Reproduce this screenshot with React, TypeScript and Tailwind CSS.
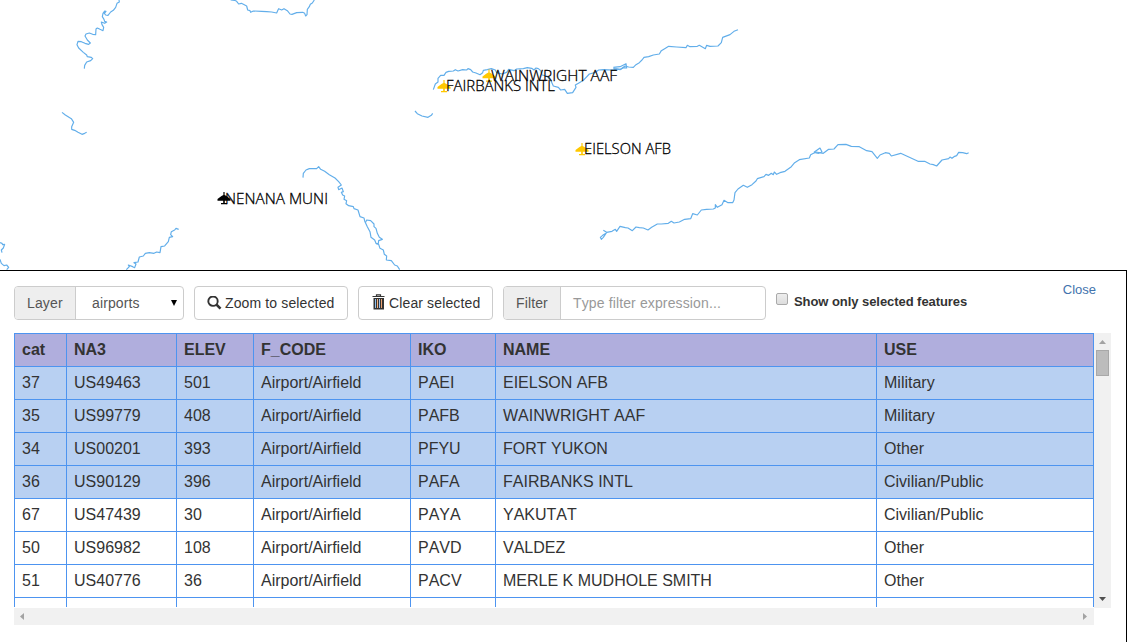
import React from "react";

// River traces, in thirds of a pixel; x is the horizontal offset of each trace.
const rivers = [
  { x: 0, points: "357,0 358,6 351,10 347,22 340,31 332,36 324,46 317,45 313,40 318,34 314,33 309,40 307,50 312,58 314,64 320,66 314,70 304,66 306,74 311,82 309,92 300,88 292,84 288,87 287,104 278,103 268,99 258,102 255,108 262,120 271,129 266,133 255,130 244,125 234,124 231,134 236,144 250,157 260,165 262,170 274,172 278,176 272,182 260,186 254,196 253,206" },
  { x: 0, points: "692,0 704,1 710,4 716,12 724,10 730,13 740,18 743,30 750,32 752,37 760,33 785,34 800,35 815,36 830,39 834,30 836,26 845,30 852,26 862,32 870,42 876,43 890,38 908,37 914,40 917,48 921,44 922,28 928,20 931,13 937,9 943,0" },
  { x: 0, points: "186,337 196,345 214,356 221,367 215,380 215,388 224,391 234,397 246,403 254,400 260,397" },
  { x: 0, points: "0,728 6,730 8,734 14,733 10,744 4,750 6,758" },
  { x: 0, points: "0,778 4,790 12,797 20,795 26,802 20,809" },
  { x: 0, points: "379,809 388,800 385,795 398,800 404,803 408,792 402,788 414,786 418,771 430,768 436,760 448,758 462,760 470,756 480,758 483,740 494,738 505,725 508,712 518,710 512,704 514,695 524,690 528,685 536,688" },
  { x: 870, points: "39,533 40,520 48,510 58,506 80,506 86,500 92,508 104,514 118,524 135,534 146,545 154,555 144,562 146,569 156,564 160,575 154,577 158,585 164,588 162,598 170,602 168,611 176,617 190,620 192,626 204,630 210,650 222,654 224,663 232,680 240,695 243,712 254,720 258,730 266,733 270,745 280,750 283,763 290,768 289,780 304,782 314,795 322,798 329,809" },
  { x: 870, points: "226,668 230,660 242,662 252,672 252,680 258,685 262,700 268,712 277,718 266,722 265,730 258,731" },
  { x: 870, points: "375,333 382,341 396,348 414,352 424,346 428,340" },
  { x: 870, points: "430,269 436,252 444,246 444,235 452,226 462,226 468,217 476,214 490,213 496,209 504,213 518,209 530,210 534,206 542,209 548,216 558,219 570,224 578,218 580,211 592,209 604,206 616,210 620,218 636,222 650,217 656,208 672,212 680,207 700,206 712,203 725,205 732,210 738,204 745,206 752,212 756,225 770,228 782,240 790,258 805,262 812,270 824,268 832,280 848,278 858,262 856,255 868,248 880,241" },
  { x: 1680, points: "70,241 88,222 104,218 116,210 130,209 160,210 170,207 180,209 195,198 206,201 220,202 228,194 238,188 246,180 252,172 266,170 280,165 298,162 304,152 314,146 326,139 350,141 378,143 382,136 390,140 412,139 418,136 436,146 440,136 450,139 474,138 484,128 488,112 510,104 522,94 534,89" },
  { x: 1680, points: "160,202 180,200 198,191 200,204 190,203 182,208 160,206" },
  { x: 1680, points: "130,691 140,697 156,694 166,688 170,694 180,679 196,683 204,684 217,692 228,681 238,683 250,684 264,690 275,682 292,672 304,672 325,670 334,664 342,669 358,666 374,658 392,656 398,641 412,645 424,630 440,628 460,627 466,624 466,614 472,622 486,614 492,601 504,608 518,608 522,600 525,578 534,567 550,556 562,562 576,554 588,543 592,536 612,530 618,523 626,526 634,520 640,524 643,516 650,523 660,518 675,514 694,500 704,488 718,479 748,474 752,464 768,456 790,460 806,448 822,447 834,434 858,433 874,439 898,440 920,452 936,455 952,475 960,465 976,458 988,460 994,468 1022,460 1048,472 1074,484 1094,484 1110,492 1120,494 1130,498 1146,480 1166,476 1170,471 1176,475 1184,469 1190,467 1196,457 1208,458 1220,461 1226,458" },
  { x: 1680, points: "762,457 780,444 786,456 776,460 762,457" },
  { x: 1680, points: "140,697 130,712 124,718 121,712 128,706 138,700" },
];

const airports = [
  { name: "WAINWRIGHT AAF", x: 489, y: 76, len: 126, dx: 2, dy: 5, color: "#ffc800" },
  { name: "FAIRBANKS INTL", x: 444, y: 86.5, len: 109, dx: 2, dy: 4.5, color: "#ffc800" },
  { name: "EIELSON AFB", x: 582, y: 149.5, len: 87, dx: 2, dy: 4.5, color: "#ffc800" },
  { name: "NENANA MUNI", x: 224, y: 198.5, len: 103, dx: 1, dy: 5.5, color: "#000" },
];

const columns = ["cat", "NA3", "ELEV", "F_CODE", "IKO", "NAME", "USE"];
const rows = [
  ["37", "US49463", "501", "Airport/Airfield", "PAEI", "EIELSON AFB", "Military"],
  ["35", "US99779", "408", "Airport/Airfield", "PAFB", "WAINWRIGHT AAF", "Military"],
  ["34", "US00201", "393", "Airport/Airfield", "PFYU", "FORT YUKON", "Other"],
  ["36", "US90129", "396", "Airport/Airfield", "PAFA", "FAIRBANKS INTL", "Civilian/Public"],
  ["67", "US47439", "30", "Airport/Airfield", "PAYA", "YAKUTAT", "Civilian/Public"],
  ["50", "US96982", "108", "Airport/Airfield", "PAVD", "VALDEZ", "Other"],
  ["51", "US40776", "36", "Airport/Airfield", "PACV", "MERLE K MUDHOLE SMITH", "Other"],
  ["", "", "", "", "", "", ""],
];

function MapView() {
  return (
    <svg className="block h-[270px] w-[1127px] shrink-0" viewBox="0 0 1127 270">
      <g transform="scale(0.33333)">
        {rivers.map((r) => (
          <polyline
            key={r.points}
            points={r.points}
            transform={`translate(${r.x} 0)`}
            fill="none"
            stroke="#62aeea"
            strokeWidth="3.5"
            strokeLinejoin="round"
          />
        ))}
      </g>
      {airports.map((a) => (
        <g key={a.name} transform={`translate(${a.x} ${a.y})`}>
          <path
            fill={a.color}
            d="M-.6-6.500h1.200V-3.500L2.500-2.500 6.500.500v1.700H.8V4.500H3V5.700H-3V4.500H-.8V2.200H-6.500V.500l4-3L-.6-3.500z"
          />
          <text
            x={a.dx}
            y={a.dy}
            textLength={a.len}
            lengthAdjust="spacingAndGlyphs"
            stroke="#000"
            strokeWidth="0.3"
            className="fill-black font-['Open_Sans','Noto_Sans',sans-serif] text-[15px] font-light"
          >
            {a.name}
          </text>
        </g>
      ))}
    </svg>
  );
}

function SearchIcon() {
  return (
    <svg className="mr-[3px] size-[15px] shrink-0" viewBox="0 0 15 15" fill="none" stroke="#333">
      <circle cx="6" cy="5.200" r="4.700" strokeWidth="1.900" />
      <path d="M9.500 8.700l4 4" strokeWidth="2.600" />
    </svg>
  );
}

function TrashIcon() {
  return (
    <svg className="mr-1 mb-[2px] h-[16px] w-[13px] shrink-0" viewBox="0 0 13 16">
      <path d="M4.500 2V.8h4V2M.5 2.500h12" fill="none" stroke="#333" strokeWidth="1.200" />
      <path d="M1.500 4h10.500V15.500h-10.500z" fill="#333" />
      <path d="M3.500 5v9" stroke="#8fc0ee" />
      <path d="M5.500 5v9" stroke="#f0b080" />
      <path d="M7.500 5v9" stroke="#9fc4ee" />
      <path d="M9.500 5v9" stroke="#e9a070" />
    </svg>
  );
}

function Toolbar() {
  return (
    <div className="flex h-[34px] text-[14px] leading-5 tracking-[0.13px]">
      <div className="flex w-[170px] overflow-hidden rounded-[4px] border border-[#ccc]">
        <span className="flex w-[61px] items-center border-r border-[#ccc] bg-[#eee] pl-3 text-[#555]">Layer</span>
        <span className="flex flex-1 items-center justify-between pr-[6px] pl-4 text-[#555]">
          airports
          <svg className="h-[6px] w-[6px]" viewBox="0 0 6 6">
            <path d="M0 0h6L3 6z" fill="#000" />
          </svg>
        </span>
      </div>
      <button className="ml-[10px] flex w-[154px] items-center rounded-[4px] border border-[#ccc] pl-3 whitespace-nowrap text-[#333]">
        <SearchIcon />
        Zoom to selected
      </button>
      <button className="ml-[10px] flex w-[135px] items-center rounded-[4px] border border-[#ccc] pl-[13px] whitespace-nowrap text-[#333]">
        <TrashIcon />
        Clear selected
      </button>
      <div className="ml-[10px] flex w-[263px] overflow-hidden rounded-[4px] border border-[#ccc]">
        <span className="flex w-[57px] items-center border-r border-[#ccc] bg-[#eee] pl-3 text-[#555]">Filter</span>
        <span className="flex items-center pl-3 text-[#999]">Type filter expression...</span>
      </div>
      <div className="ml-[10px] flex items-start pt-[7px]">
        <span className="size-[12px] rounded-[2px] border border-[#aaa] bg-linear-to-b from-[#eee] to-[#ddd]" />
        <span className="ml-[6px] text-[13px] leading-[18px] font-bold tracking-[-0.06px] whitespace-nowrap text-[#333]">
          Show only selected features
        </span>
      </div>
      <a className="mt-[-5px] ml-auto pr-[30px] text-[13px] leading-[18px] tracking-normal text-[#4273ad]">Close</a>
    </div>
  );
}

function VerticalScrollbar() {
  return (
    <div className="flex h-[275px] w-[17px] flex-col items-center bg-[#f1f1f1]">
      <svg className="mt-[7px] h-[4px] w-[7px] shrink-0" viewBox="0 0 7 4">
        <path d="M0 4h7L3.500 0z" fill="#a3a3a3" />
      </svg>
      <div className="mt-[6px] h-[26px] w-[13px] border border-[#a8a8a8] bg-[#bcbcbc]" />
      <svg className="mt-auto mb-[7px] h-[4px] w-[7px]" viewBox="0 0 7 4">
        <path d="M0 0h7L3.500 4z" fill="#505050" />
      </svg>
    </div>
  );
}

function HorizontalScrollbar() {
  return (
    <div className="flex h-[17px] w-[1080px] items-center justify-between bg-[#f1f1f1] pr-[7px] pl-[6px]">
      <svg className="h-[7px] w-[4px]" viewBox="0 0 4 7">
        <path d="M4 0v7L0 3.500z" fill="#a3a3a3" />
      </svg>
      <svg className="h-[7px] w-[4px]" viewBox="0 0 4 7">
        <path d="M0 0v7l4-3.500z" fill="#a3a3a3" />
      </svg>
    </div>
  );
}

function AttributeTable() {
  const line = "grid h-[33px] grid-cols-[52px_110px_77px_157px_85px_381px_217px]";
  const cell = "border-t border-r border-[#4d94f0] pl-[7px] leading-8 whitespace-nowrap";
  return (
    <div className="h-[274px] w-[1080px] overflow-hidden border-l border-[#4d94f0] text-[16px] text-[#333]">
      <div className={`${line} bg-[#b0aedd] font-bold`}>
        {columns.map((c) => (
          <div key={c} className={cell}>{c}</div>
        ))}
      </div>
      {rows.map((row, i) => (
        <div key={i} className={`${line} ${i < 4 ? "bg-[#b8d0f2]" : "bg-white"}`}>
          {row.map((value, j) => (
            <div key={j} className={cell}>{value}</div>
          ))}
        </div>
      ))}
    </div>
  );
}

export default function App() {
  return (
    <div className="flex h-[642px] w-[1127px] flex-col overflow-hidden bg-white font-['Liberation_Sans',Arial,sans-serif]">
      <MapView />
      <section className="h-[372px] border-t border-r border-black pt-[15px] pl-[14px] [font-kerning:none]">
        <Toolbar />
        <div className="mt-[13px] flex h-[275px]">
          <AttributeTable />
          <VerticalScrollbar />
        </div>
        <HorizontalScrollbar />
      </section>
    </div>
  );
}
